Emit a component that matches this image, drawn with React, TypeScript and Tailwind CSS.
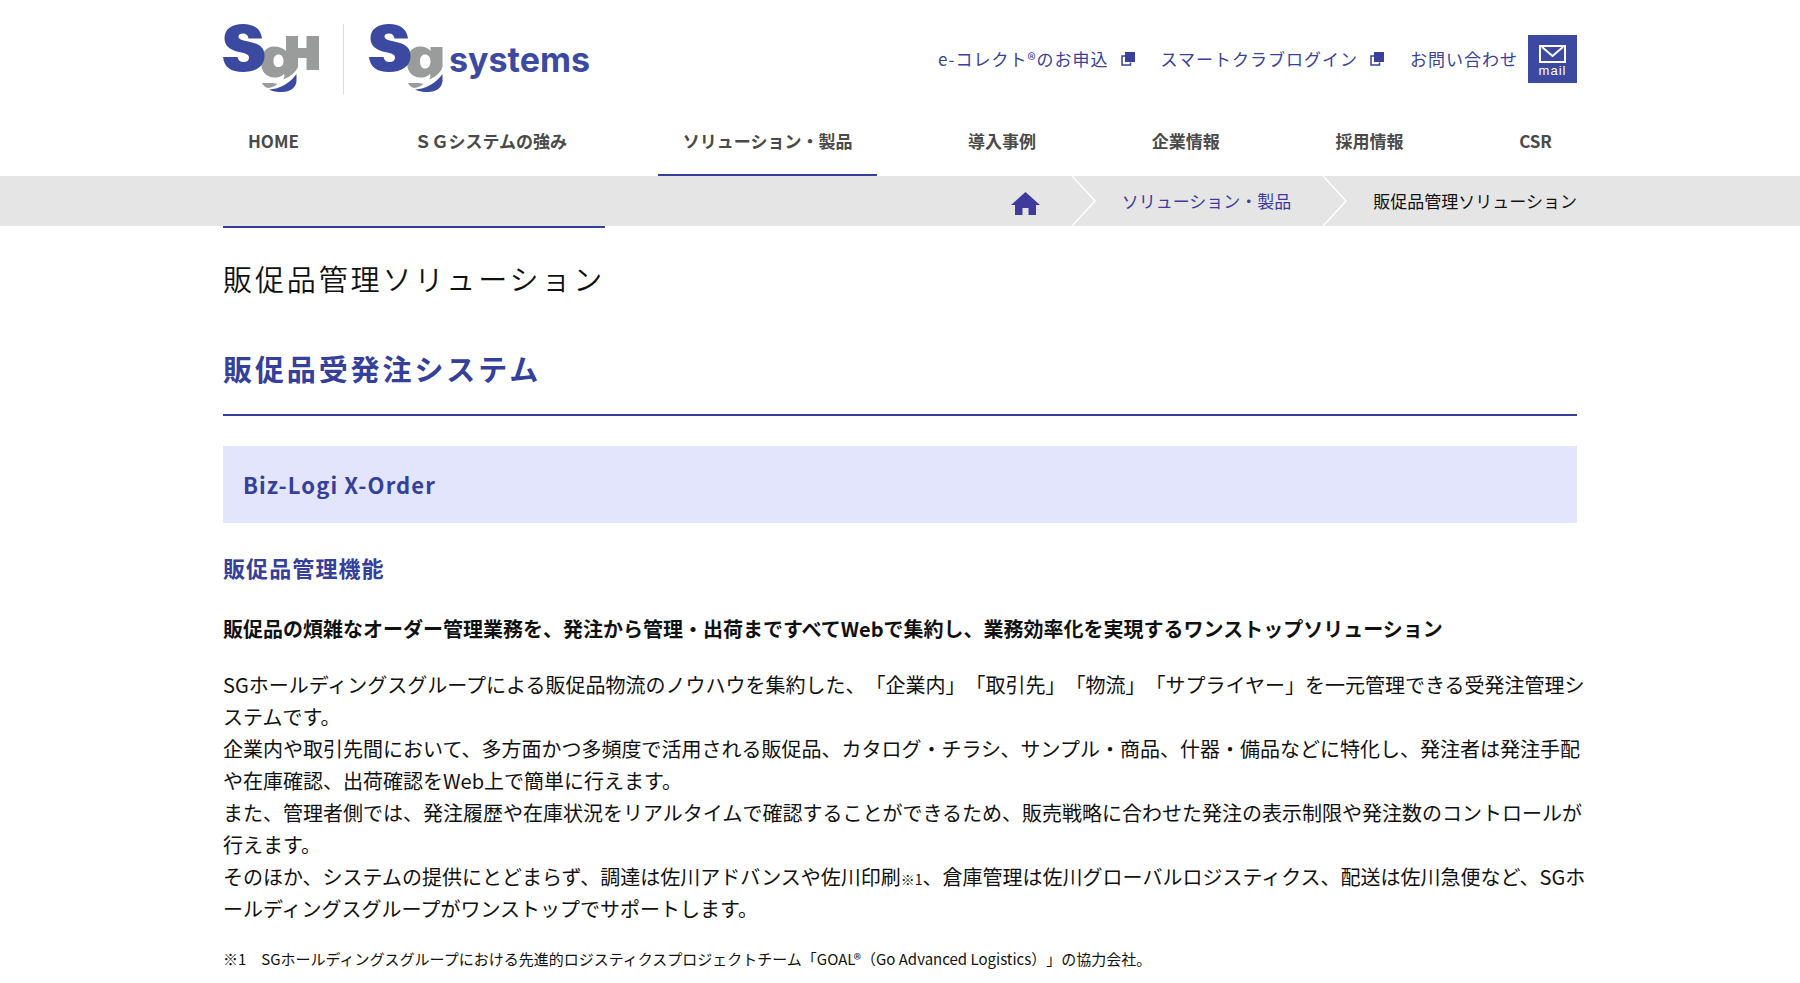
import React from 'react';

const navItems = [
  { label: 'HOME' },
  { label: 'ＳＧシステムの強み' },
  { label: 'ソリューション・製品', active: true },
  { label: '導入事例' },
  { label: '企業情報' },
  { label: '採用情報' },
  { label: 'CSR' },
];

const SMark: React.FC = () => (
  <path
    fill="#3b4aa0"
    d="M39 14.500 C38 5 31 0 20 0 C9 0 1.500 5 1.500 14 C1.500 22 7 26 16 28 C23 29.500 26 30.500 26 33.500 C26 36.500 24 38 20.500 38 C17 38 15 36 14.500 33 L0 33 C1 43 8 48 20 48 C33 48 41.500 42 41.500 32 C41.500 23 36 20 27 18 C19 16 15.500 15.500 15.500 12.500 C15.500 10.500 17 9.500 20 9.500 C23 9.500 25 11 25.500 14.500 Z"
  />
);

// Lower bowl of the "g": grey sliver, then the blue sweep
const Swoosh: React.FC = () => (
  <>
    <path fill="#9a9b9b" d="M39 59 H50 C52 59.500 54 60 55 59.500 C52 62 49 63.500 45 64 C42 63 40 61.500 39 59 Z" />
    <path fill="#3b4aa0" d="M73.500 50 V57 C73 64 67 68 59 68 C54 68 50 67.500 46 65.500 C57 65 67 59 73.500 50 Z" />
  </>
);

const GroupLogo: React.FC = () => (
  <svg className="h-[68px] w-24" viewBox="0 0 96 68" aria-hidden="true">
    <path
      fill="#9a9b9b"
      fillRule="evenodd"
      d="M63 12 H75 V24 H83.500 V12 H96 V46 H83.500 V34 H75 V43 C73 48 67 53 60 55.500 C62 53 61.500 51 61 50 C58 53 55 53.500 51 53.500 C43 53.500 38 47 38 38.500 C38 29 43 22.500 51 22.500 C56 22.500 60 24 63 27 Z M55.500 30.500 C52.500 30.500 50.500 33 50.500 37 C50.500 41 52.500 43 55.500 43 C58.500 43 60.500 41 60.500 37 C60.500 33 58.500 30.500 55.500 30.500 Z"
    />
    <SMark />
    <Swoosh />
  </svg>
);

const SystemsLogo: React.FC = () => (
  <svg className="h-[68px] w-[74px]" viewBox="0 0 74 68" aria-hidden="true">
    <path
      fill="#9a9b9b"
      fillRule="evenodd"
      d="M61.500 23 H73.500 V43 C72 48 67 53 60 55.500 C62 53 61.500 51 61 50 C58 53 55 53.500 51 53.500 C43 53.500 38 47 38 38.500 C38 29 43 22.500 51 22.500 C56 22.500 59 24 61.500 27 Z M56 30.500 C53 30.500 51 33 51 37.500 C51 42 53 44.500 56 44.500 C59 44.500 61.500 42 61.500 37.500 C61.500 33 59 30.500 56 30.500 Z"
    />
    <SMark />
    <Swoosh />
  </svg>
);

const ExternalIcon: React.FC = () => (
  <svg className="ml-3 h-[14px] w-[14px]" viewBox="0 0 14 14" aria-hidden="true">
    <path d="M4.500 4 H1 V13 H9.500 V10.500" fill="none" stroke="#3a419b" strokeWidth="1.500" />
    <rect x="4" y="0" width="10" height="10" fill="#3a419b" />
  </svg>
);

const Chevron: React.FC = () => (
  <svg className="h-[50px] w-6" viewBox="0 0 24 50" aria-hidden="true">
    <path d="M0 0 L23 25 L0 50" fill="none" stroke="#fff" strokeWidth="1.500" />
  </svg>
);

const App: React.FC = () => {
  return (
    <div
      lang="ja"
      className="min-h-screen bg-white font-['Noto_Sans_CJK_JP','Noto_Sans',sans-serif] text-[#111] [text-spacing-trim:space-all]"
    >
      <header className="mx-auto max-w-[1354px]">
        <div className="flex items-start justify-between pt-6">
          <div className="flex items-start">
            <a href="/" aria-label="SGH">
              <GroupLogo />
            </a>
            <div className="ml-6 h-[70px] w-px bg-[#dddddd]" />
            <a href="/" className="ml-[25px] flex items-start text-[#3b4aa0]">
              <SystemsLogo />
              <span className="ml-[6px] pt-4 font-['Inter',sans-serif] text-[34px] leading-10 font-bold">systems</span>
            </a>
          </div>
          <div className="flex items-center pt-[11px] text-[17px] leading-6 tracking-[1px] text-[#3a419b]">
            <a href="/" className="flex items-center">
              e-コレクト®のお申込
              <ExternalIcon />
            </a>
            <a href="/" className="ml-[26px] flex items-center">
              スマートクラブログイン
              <ExternalIcon />
            </a>
            <a href="/" className="ml-[26px]">
              お問い合わせ
            </a>
            <a
              href="/"
              className="ml-[10px] flex h-12 w-[49px] flex-col items-center justify-end bg-[#3b4aa0] pb-1 font-['Liberation_Sans',sans-serif] text-[13px] leading-4 text-white"
            >
              <svg className="h-[18px] w-[27px]" viewBox="0 0 27 18" aria-hidden="true">
                <rect x="1" y="1" width="25" height="16" fill="none" stroke="#fff" strokeWidth="2" />
                <path d="M3 2 L13.500 11 L24 2" fill="none" stroke="#fff" strokeWidth="2" />
              </svg>
              mail
            </a>
          </div>
        </div>

        <nav className="mt-5 flex justify-between text-[17px] leading-6 font-bold text-[#4a4a4a]">
          {navItems.map((item) => (
            <a
              key={item.label}
              href="/"
              className={
                item.active
                  ? 'border-b-2 border-[#34409a] px-[25px] pt-[15px] pb-[21px]'
                  : 'border-b-2 border-transparent px-[25px] pt-[15px] pb-[21px]'
              }
            >
              {item.label}
            </a>
          ))}
        </nav>
      </header>

      {/* Breadcrumb */}
      <div className="bg-[#e5e5e5]">
        <div className="mx-auto flex h-[50px] max-w-[1354px] items-center justify-end text-[17px] leading-6">
          <a href="/" aria-label="HOME" className="mr-8 pt-1">
            <svg className="h-[23px] w-[29px]" viewBox="0 0 29 23" aria-hidden="true">
              <path d="M14.500 0 L29 13 H25 V23 H17.500 V16 H11.500 V23 H4 V13 H0 Z" fill="#403a9c" />
            </svg>
          </a>
          <Chevron />
          <a href="/" className="mr-8 ml-[26px] text-[#403a9c]">
            ソリューション・製品
          </a>
          <Chevron />
          <span className="ml-[26px]">販促品管理ソリューション</span>
        </div>
      </div>

      <main className="mx-auto max-w-[1354px]">
        <h1 className="inline-block border-t-2 border-[#34409a] pt-7 text-[29px] leading-[44px] font-[350] tracking-widest">
          販促品管理ソリューション
        </h1>
        <h2 className="mt-[46px] border-b-2 border-[#34409a] pb-6 text-[29px] leading-[44px] font-bold tracking-widest text-[#34409a]">
          販促品受発注システム
        </h2>
        <h3 className="mt-[30px] bg-[#e2e5fb] px-5 py-5 text-[22px] leading-[37px] font-bold tracking-wider text-[#34409a]">
          Biz-Logi X-Order
        </h3>
        <h4 className="mt-[26px] text-[22px] leading-9 font-bold tracking-wider text-[#34409a]">販促品管理機能</h4>
        <p className="mt-7 text-[20px] leading-8 font-bold">
          販促品の煩雑なオーダー管理業務を、発注から管理・出荷まですべてWebで集約し、業務効率化を実現するワンストップソリューション
        </p>
        <p className="mt-6 -mr-5 text-[20px] leading-8">
          SGホールディングスグループによる販促品物流のノウハウを集約した、「企業内」「取引先」「物流」「サプライヤー」を一元管理できる受発注管理システムです。
          <br />
          企業内や取引先間において、多方面かつ多頻度で活用される販促品、カタログ・チラシ、サンプル・商品、什器・備品などに特化し、発注者は発注手配や在庫確認、出荷確認をWeb上で簡単に行えます。
          <br />
          また、管理者側では、発注履歴や在庫状況をリアルタイムで確認することができるため、販売戦略に合わせた発注の表示制限や発注数のコントロールが行えます。
          <br />
          そのほか、システムの提供にとどまらず、調達は佐川アドバンスや佐川印刷<small className="text-[14px] leading-none">※1</small>、倉庫管理は佐川グローバルロジスティクス、配送は佐川急便など、SGホールディングスグループがワンストップでサポートします。
        </p>
        <p className="mt-[22px] pb-2 text-[15px] leading-6">
          ※1　SGホールディングスグループにおける先進的ロジスティクスプロジェクトチーム「GOAL®（Go Advanced Logistics）」の協力会社。
        </p>
      </main>
    </div>
  );
};

export default App;
